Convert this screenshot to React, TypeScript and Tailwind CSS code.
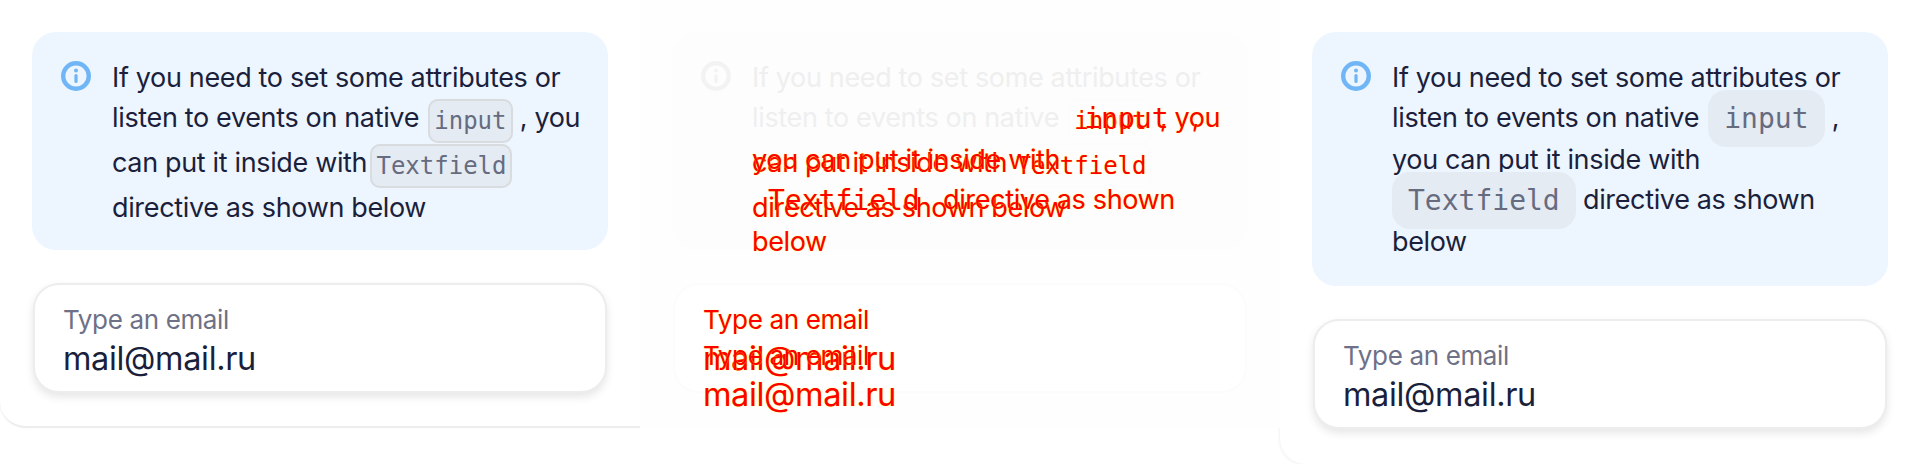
import React from 'react';

type Variant = 'old' | 'new';
type Tone = 'normal' | 'ghost' | 'diff';

// Class sets for each way a card can be painted.
const tones = {
  normal: {
    notice: 'bg-[#edf5ff]',
    lead: 'text-[#1b1f3b]',
    rest: 'text-[#1b1f3b]',
    code: 'text-[#666b80] bg-[#e4ebf3]',
    border: 'border-[#d9dcdf]',
    field: 'bg-white border-[#ededed] shadow-[0_4px_8px_rgba(0,0,0,0.1)]',
    label: 'text-[#6e7187]',
    value: 'text-[#1b1f3b]',
    icon: '#70b6f6',
  },
  ghost: {
    notice: 'bg-[#fdfdfd]',
    lead: 'text-[#efefef]',
    rest: 'text-transparent',
    code: 'text-transparent bg-[#fdfdfd]',
    border: 'border-[#fcfcfc]',
    field: 'bg-white border-[#fcfcfc]',
    label: 'text-transparent',
    value: 'text-transparent',
    icon: '#f3f3f3',
  },
  diff: {
    notice: 'bg-transparent',
    lead: 'text-transparent',
    rest: 'text-[#f00] [text-shadow:0_0_1px_#ff0]',
    code: 'text-[#f00] bg-transparent [text-shadow:0_0_1px_#ff0]',
    border: 'border-transparent',
    field: 'bg-transparent border-transparent',
    label: 'text-[#f00] [text-shadow:0_0_1px_#ff0]',
    value: 'text-[#f00] [text-shadow:0_0_1px_#ff0]',
    icon: 'transparent',
  },
};

const InfoIcon = ({ color }: { color: string }) => (
  <svg width="30" height="30" viewBox="0 0 30 30" fill="none" className="mt-[3px] shrink-0">
    <circle cx="15" cy="15" r="12.8" stroke={color} strokeWidth="4.4" />
    <circle cx="15" cy="9.5" r="2" fill={color} />
    <rect x="13.4" y="13" width="3.2" height="9" rx="1.6" fill={color} />
  </svg>
);

const Code = ({ variant, tone, className, children }: { variant: Variant; tone: Tone; className?: string; children: React.ReactNode }) => {
  const t = tones[tone];
  return (
    <code
      className={
        variant === 'old'
          ? `align-[-2px] leading-[43px] py-[6px] px-[4px] border-[2px] rounded-[10px] font-['DejaVu_Sans_Mono',monospace] tracking-normal text-[24px] ${t.code} ${t.border} ${className ?? ''}`
          : `align-[-1px] leading-[42px] py-[12px] px-[16px] rounded-[18px] font-['DejaVu_Sans_Mono',monospace] tracking-normal text-[28px] ${t.code} ${className ?? ''}`
      }
    >
      {children}
    </code>
  );
};

// Info notice and the text field under it.
const Card = ({ variant, tone = 'normal' }: { variant: Variant; tone?: Tone }) => {
  const t = tones[tone];
  const isOld = variant === 'old';
  return (
    <div className="flex flex-col px-[32px] pt-[32px] font-['Inter',sans-serif] tracking-[-0.35px]">
      <div className={`flex gap-[21px] pl-[29px] pr-[24px] pt-[26px] rounded-[24px] ${isOld ? 'h-[218px]' : 'h-[254px]'} ${t.notice}`}>
        <InfoIcon color={t.icon} />
        <p className="text-[27px] leading-[40px] m-0 w-[480px]">
          <span className={t.lead}>If you need to set some attributes or listen to events on native </span>
          <Code variant={variant} tone={tone} className="ml-[2px]">input</Code>
          <span className={t.rest}> , {isOld ? 'you can' : <><br />you can</>} put it inside with </span>
          <Code variant={variant} tone={tone} className={isOld ? '-ml-[4px]' : ''}>Textfield</Code>
          <span className={t.rest}> directive as shown below</span>
        </p>
      </div>
      <div className={`flex flex-col mt-[33px] ml-[1px] w-[574px] h-[110px] px-[28px] pt-[16px] border-[2px] rounded-[26px] ${t.field}`}>
        <span className={`text-[26px] leading-[38px] ${t.label}`}>Type an email</span>
        <span className={`text-[32.5px] leading-[40px] ${t.value}`}>mail@mail.ru</span>
      </div>
    </div>
  );
};

export default function App() {
  return (
    <div className="grid grid-cols-3 w-[1920px] h-[464px] bg-white overflow-hidden">
      <div className="h-[428px] bg-white border-b-[2px] border-[#ededed] rounded-bl-[26px] shadow-[-1px_0_2px_rgba(0,0,0,0.04)]">
        <Card variant="old" />
      </div>
      <div className="relative h-[428px] bg-[#fefefe]">
        <Card variant="old" tone="ghost" />
        <div className="absolute inset-0">
          <Card variant="old" tone="diff" />
        </div>
        <div className="absolute inset-0">
          <Card variant="new" tone="diff" />
        </div>
      </div>
      <div className="h-[464px] bg-white rounded-bl-[26px] shadow-[-1px_1px_3px_rgba(0,0,0,0.05)]">
        <Card variant="new" />
      </div>
    </div>
  );
}
